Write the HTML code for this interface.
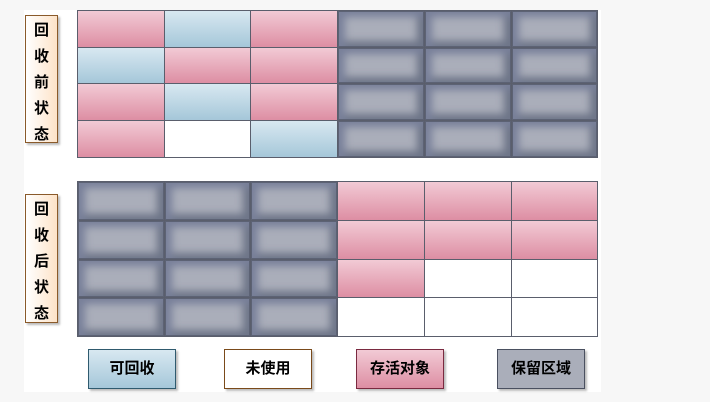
<!DOCTYPE html>
<html><head><meta charset="utf-8"><style>
body{margin:0;width:710px;height:402px;background:#f7f7f7;position:relative;overflow:hidden;font-family:"Liberation Sans","Noto Sans CJK SC",sans-serif}
.bg{position:absolute;left:24px;top:10px;width:577px;height:382px;background:#fff}
.c{position:absolute;box-sizing:border-box;border:1px solid #5a5e6c}
.p{background:linear-gradient(#f2cad5,#dd8ea3)}
.b{background:linear-gradient(#d8e8f1,#a5c7d9)}
.w{background:#fff}
.g{background:#aaaeba;box-shadow:inset 0 0 0 1px #5c6274,inset 6px 5px 8px 1px #79809a,inset -6px -5px 8px 1px #6e7588}
.lab{position:absolute;left:25px;width:33px;box-sizing:border-box;border:1px solid #8a5a2a;background:linear-gradient(90deg,#fff,#fde3c8);box-shadow:2px 2px 2px #bbb;font-weight:bold;font-size:15px;text-align:center;line-height:26px;padding-top:2px}
.leg{position:absolute;top:349px;width:88px;height:40px;box-sizing:border-box;font-weight:bold;font-size:15px;text-align:center;line-height:38px;box-shadow:2px 2px 2px #bbb}
</style></head><body>
<div class="bg"></div>
<div class="lab" style="top:15px;height:128px">回<br>收<br>前<br>状<br>态</div>
<div class="lab" style="top:194px;height:129px">回<br>收<br>后<br>状<br>态</div>
<div id="g1"></div><div id="g2"></div>
<div class="leg b" style="left:88px;border:1px solid #2f5a6e">可回收</div>
<div class="leg w" style="left:224px;border:1px solid #7a4a1a">未使用</div>
<div class="leg p" style="left:356px;border:1px solid #7a2a40">存活对象</div>
<div class="leg g" style="left:497px;border:1px solid #4a5060">保留区域</div>
<script>
var xs=[77,164,250,337,424,511,597];
function grid(ys,m){var h='';for(var r=0;r<4;r++)for(var c=0;c<6;c++){h+='<div class="c '+m[r][c]+'" style="left:'+xs[c]+'px;top:'+ys[r]+'px;width:'+(xs[c+1]-xs[c]+1)+'px;height:'+(ys[r+1]-ys[r]+1)+'px"></div>';}return h;}
document.getElementById('g1').innerHTML=grid([10,47,83,120,157],[['p','b','p','g','g','g'],['b','p','p','g','g','g'],['p','b','p','g','g','g'],['p','w','b','g','g','g']]);
document.getElementById('g2').innerHTML=grid([181,220,259,297,336],[['g','g','g','p','p','p'],['g','g','g','p','p','p'],['g','g','g','p','w','w'],['g','g','g','w','w','w']]);
</script>
</body></html>
